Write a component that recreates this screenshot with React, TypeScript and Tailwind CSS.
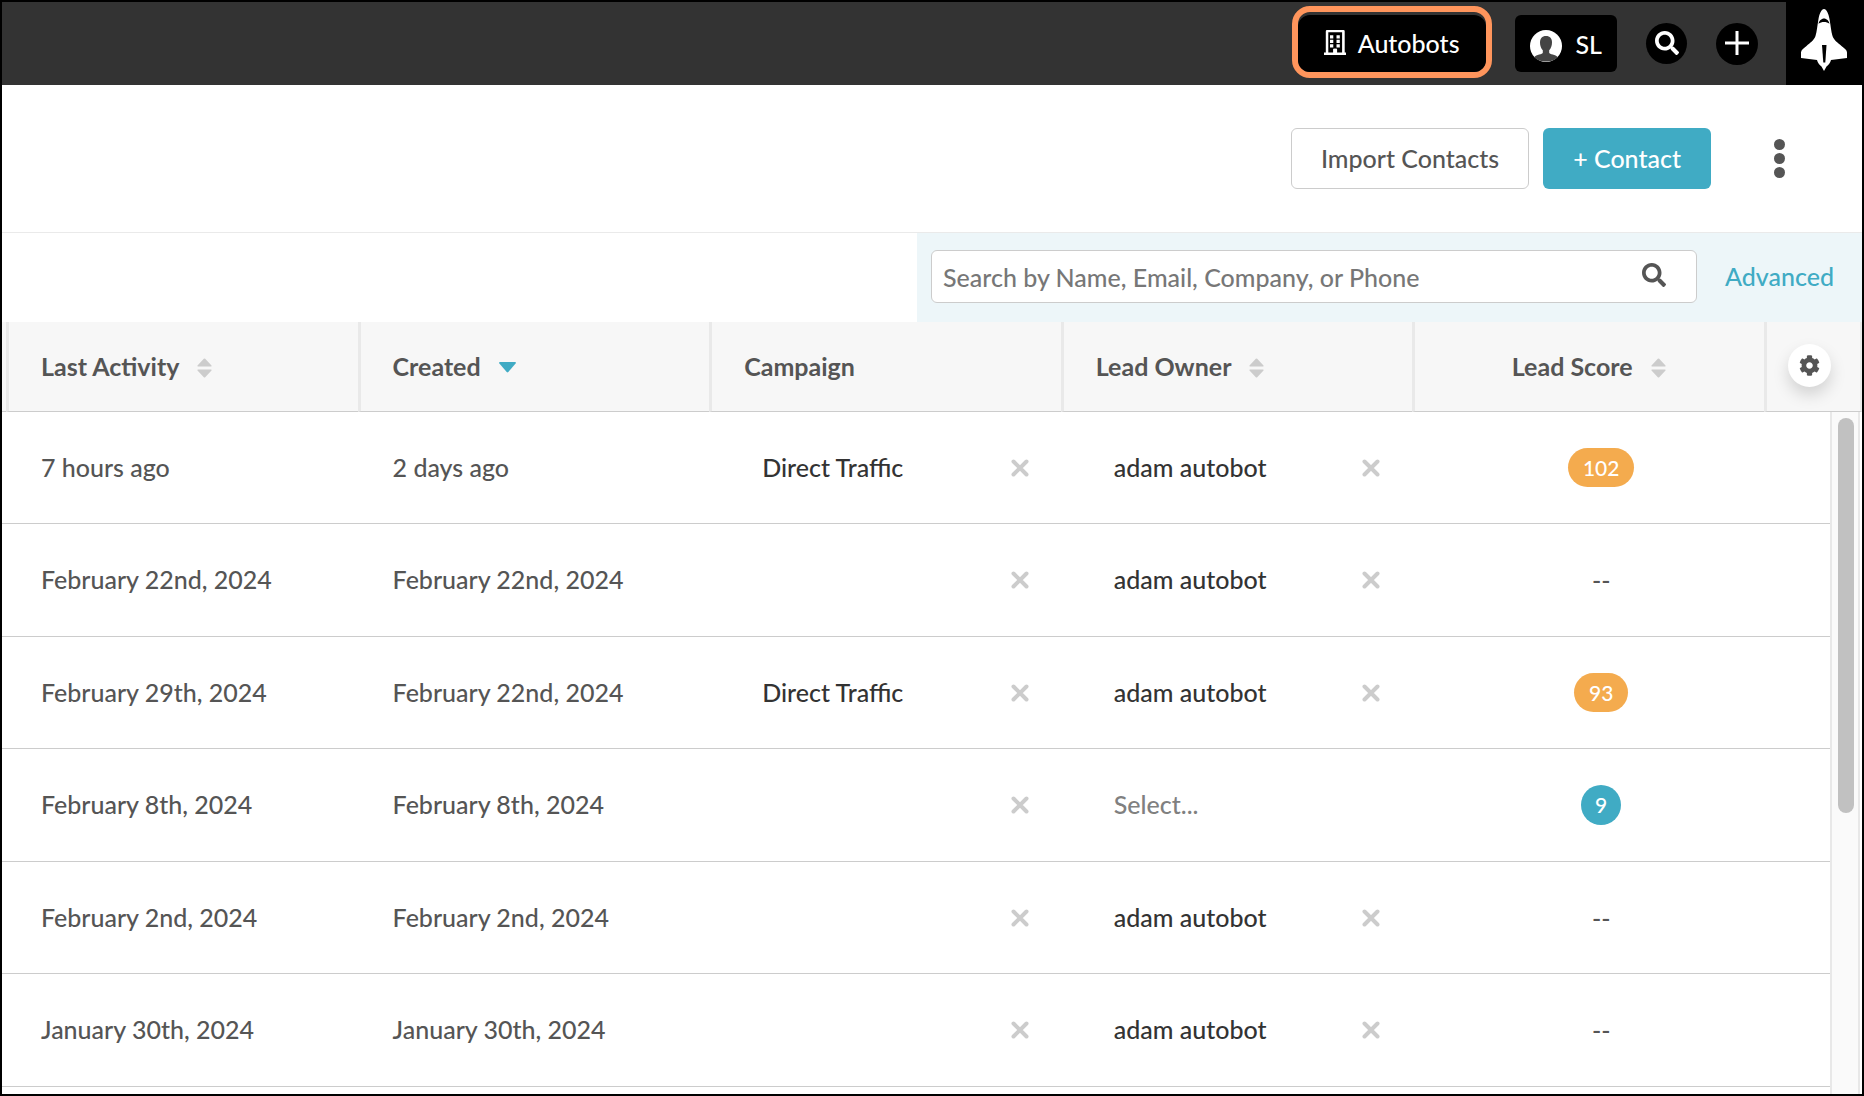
import { ReactNode } from 'react';
import { FaCog, FaSearch } from 'react-icons/fa';

interface Contact {
  lastActivity: string;
  created: string;
  campaign?: string;
  owner?: string;
  score?: number;
}

const contacts: Contact[] = [
  { lastActivity: '7 hours ago', created: '2 days ago', campaign: 'Direct Traffic', owner: 'adam autobot', score: 102 },
  { lastActivity: 'February 22nd, 2024', created: 'February 22nd, 2024', owner: 'adam autobot' },
  { lastActivity: 'February 29th, 2024', created: 'February 22nd, 2024', campaign: 'Direct Traffic', owner: 'adam autobot', score: 93 },
  { lastActivity: 'February 8th, 2024', created: 'February 8th, 2024', score: 9 },
  { lastActivity: 'February 2nd, 2024', created: 'February 2nd, 2024', owner: 'adam autobot' },
  { lastActivity: 'January 30th, 2024', created: 'January 30th, 2024', owner: 'adam autobot' },
];

function BuildingIcon() {
  return (
    <svg viewBox="0 0 22 25" className="h-[25px] w-[22px]" fill="currentColor" aria-hidden="true">
      <path fillRule="evenodd" d="M3 0h16.500q1.200 0 1.200 1.200v21.300H22V25H0v-2.500h1.800V1.200Q1.800 0 3 0zM4.300 2.300v20.200h5v-3q0-.8.8-.8h2.200q.8 0 .8.8v3h5V2.300z" />
      <path d="M9.300 18.700h3.600v4.500H9.300zM6 5.200h3.300v3.200H6zM12.500 5.200h3.300v3.200h-3.300zM6 9.800h3.300V13H6zM12.500 9.800h3.300V13h-3.300zM6 14.300h3.300v3.200H6zM12.500 14.300h3.300v3.200h-3.300z" />
    </svg>
  );
}

function AvatarIcon() {
  return (
    <svg viewBox="0 0 32 32" className="mt-1 size-8" aria-hidden="true">
      <circle cx="16" cy="16" r="16" fill="#fff" />
      <path
        d="M16 6c4 0 6 2.500 6 6.500 0 3-1 6-2.800 7.800v2.500c0 1.700 6.800 1.700 8.500 4.400A16 16 0 0 1 16 31.500 16 16 0 0 1 4.300 27.200c1.700-2.700 8.500-2.700 8.500-4.400v-2.500C11 18.500 10 15.500 10 12.500 10 8.500 12 6 16 6z"
        fill="#444"
      />
    </svg>
  );
}

function ShuttleIcon() {
  return (
    <svg viewBox="0 0 46 62" className="h-[62px] w-[46px]" aria-hidden="true">
      <path
        d="M23 0c2.500 0 4.500 4.500 5.500 10 1.300 7 1.500 12 3 17 1.300 4 5.500 7 9 10 3 2.500 5.500 4 5.500 6.500V49l-16 2c-.7 3-2.500 5-4.500 6.500L23 62l-2.500-4.500C18.500 56 16.700 54 16 51L0 49v-5.500C0 41 2.500 39.500 5.500 37c3.500-3 7.700-6 9-10 1.500-5 1.700-10 3-17C18.500 4.500 20.500 0 23 0z"
        fill="#fff"
      />
      <path d="M17.500 14.800c.5-3 3-5.300 5.500-5.300s5 2.300 5.500 5.300c-3-2.400-8-2.400-11 0z" fill="#000" />
      <path d="M21 36h4.500L24.300 53.500h-2z" fill="#000" />
    </svg>
  );
}

function SortIcon() {
  return (
    <svg viewBox="0 0 15 20" className="mt-1 h-5 w-[15px]" fill="#ccc" aria-hidden="true">
      <path d="M1 8.500Q0 8.500.5 7.500L6.800.8q.7-.6 1.400 0l6.300 6.700q.5 1-.5 1zM1 11.500q-1 0-.5 1l6.300 6.700q.7.6 1.400 0l6.300-6.700q.5-1-.5-1z" />
    </svg>
  );
}

function SortedDownIcon() {
  return (
    <svg viewBox="0 0 17 11" className="mt-1 h-[11px] w-[17px]" fill="#40abc4" aria-hidden="true">
      <path d="M1 0h15q1.500.3.6 1.500L9.300 10q-.8.8-1.600 0L.4 1.500Q-.5.3 1 0z" />
    </svg>
  );
}

function ClearButton({ label }: { label: string }) {
  return (
    <button type="button" aria-label={label} className="text-[#ccc]">
      <svg viewBox="0 0 18 18" className="block size-[18px]" stroke="currentColor" strokeWidth="4" strokeLinecap="round">
        <path d="M2.500 2.500l13 13M15.500 2.500l-13 13" />
      </svg>
    </button>
  );
}

function HeaderCell({ children, center }: { children: ReactNode; center?: boolean }) {
  return (
    <th scope="col" className="border-l-[3px] border-l-[#e9e9e9] pb-0.5 pl-8 text-left font-bold">
      <div className={center ? 'flex items-center justify-center gap-[18px] pr-[34px]' : 'flex items-center gap-[18px]'}>{children}</div>
    </th>
  );
}

function ScoreBadge({ score }: { score?: number }) {
  if (score === undefined) return <span>--</span>;
  return (
    <span
      className={
        score > 50
          ? 'inline-block rounded-full bg-[#f4ab4e] px-[15px] text-[21px] leading-[39px] text-white'
          : 'inline-block rounded-full bg-[#40abc4] px-[14px] text-[21px] leading-10 text-white'
      }
    >
      {score}
    </span>
  );
}

function EditableCell({ value, placeholder, field }: { value?: string; placeholder?: string; field: string }) {
  return (
    <td className="pr-8 pl-[53px] text-[#333]">
      <div className="flex items-center justify-between">
        <span className={value ? 'pb-0.5' : 'pb-0.5 text-[#808080]'}>{value ?? placeholder}</span>
        {(value || !placeholder) && <ClearButton label={`Clear ${field}`} />}
      </div>
    </td>
  );
}

export default function App() {
  return (
    <div className="flex min-h-screen flex-col border-2 border-black bg-white font-['Lato',sans-serif] text-[25px] leading-8 font-medium text-[#555]">
      <header className="flex h-[83px] items-center justify-end bg-[#333] text-white">
        <button type="button" className="mt-1 mr-[23px] h-[72px] self-start rounded-[18px] border-6 border-[#ff955c] pt-[3px]">
          <span className="flex h-[57px] items-center gap-3 rounded-xl bg-black px-[26px] pb-0.5">
            <BuildingIcon />
            Autobots
          </span>
        </button>
        <button type="button" className="mr-[29px] flex h-[57px] items-center gap-[14px] rounded-md bg-black px-[15px]">
          <AvatarIcon />
          SL
        </button>
        <button type="button" aria-label="Search" className="mr-[29px] flex size-[41px] items-center justify-center rounded-full bg-black pb-0.5">
          <FaSearch className="size-6" />
        </button>
        <button type="button" aria-label="Add" className="mr-7 flex size-[42px] items-center justify-center rounded-full bg-black pb-0.5">
          <svg viewBox="0 0 24 24" className="size-6" stroke="currentColor" strokeWidth="3" aria-hidden="true">
            <path d="M12 0v24M0 12h24" />
          </svg>
        </button>
        <a href="#" aria-label="Home" className="flex h-full w-[76px] items-start justify-center bg-black pt-[7px]">
          <ShuttleIcon />
        </a>
      </header>

      <div className="flex h-[147px] items-center justify-end pr-[77px]">
        <button type="button" className="mr-[14px] h-[61px] rounded-md border border-[#ccc] px-[29px] pb-0.5">
          Import Contacts
        </button>
        <button type="button" className="mr-[63px] h-[61px] rounded-md bg-[#40abc4] px-[30px] pb-0.5 text-white">
          + Contact
        </button>
        <button type="button" aria-label="More actions" className="flex flex-col gap-[3px]">
          <span className="size-[11px] rounded-full bg-[#555]" />
          <span className="size-[11px] rounded-full bg-[#555]" />
          <span className="size-[11px] rounded-full bg-[#555]" />
        </button>
      </div>

      <div className="flex h-[90px] justify-end border-t border-[#eaeaea]">
        <form className="flex w-[945px] items-center bg-[#edf6f9] pr-[28px] pb-0.5 pl-[14px]">
          <div className="flex h-[53px] flex-1 items-center rounded-md border border-[#ccc] bg-white pr-[30px] pl-[11px]">
            <input
              type="text"
              aria-label="Search contacts"
              placeholder="Search by Name, Email, Company, or Phone"
              className="min-w-0 flex-1 outline-none placeholder:text-[#777]"
            />
            <button type="submit" aria-label="Search contacts" className="pb-1">
              <FaSearch className="size-6" />
            </button>
          </div>
          <a href="#" className="ml-7 pb-0.5 text-[#40abc4]">
            Advanced
          </a>
        </form>
      </div>

      <div className="relative flex-1">
        <table className="w-full table-fixed border-separate border-spacing-0">
          <colgroup>
            <col className="w-1" />
            <col />
            <col />
            <col />
            <col />
            <col />
            <col className="w-[98px]" />
          </colgroup>
          <thead>
            <tr className="h-[90px] bg-[#f7f7f7] *:border-b *:border-b-[#ccc]">
              <td />
              <HeaderCell>
                Last Activity <SortIcon />
              </HeaderCell>
              <HeaderCell>
                Created <SortedDownIcon />
              </HeaderCell>
              <HeaderCell>Campaign</HeaderCell>
              <HeaderCell>
                Lead Owner <SortIcon />
              </HeaderCell>
              <HeaderCell center>
                Lead Score <SortIcon />
              </HeaderCell>
              <th className="border-r-2 border-l-[3px] border-r-[#ebebeb] border-l-[#e9e9e9] pb-0.5 pl-[21px]">
                <button
                  type="button"
                  aria-label="Table settings"
                  className="flex size-[43px] items-center justify-center rounded-full bg-white shadow-[0_8px_16px_rgba(0,0,0,0.15)]"
                >
                  <FaCog className="size-[21px]" />
                </button>
              </th>
            </tr>
          </thead>
          <tbody>
            {contacts.map((contact, i) => (
              <tr key={i} className="h-28 *:border-b *:border-[#ccc] even:h-[113px]">
                <td />
                <td className="pb-0.5 pl-[35px]">{contact.lastActivity}</td>
                <td className="pb-0.5 pl-[35px]">{contact.created}</td>
                <EditableCell value={contact.campaign} field="campaign" />
                <EditableCell value={contact.owner} placeholder="Select..." field="lead owner" />
                <td className="pl-[26px] text-center">
                  <ScoreBadge score={contact.score} />
                </td>
                <td />
              </tr>
            ))}
          </tbody>
        </table>

        <div className="absolute top-[90px] right-0 bottom-0 w-8 border-r-2 border-white bg-white">
          <div className="h-full border-x-2 border-[#e8e8e8] bg-[#fafafa] pt-[6px] pr-1 pl-[6px]">
            <div className="h-[395px] rounded-full bg-[#c1c1c1]" />
          </div>
        </div>
      </div>
    </div>
  );
}
